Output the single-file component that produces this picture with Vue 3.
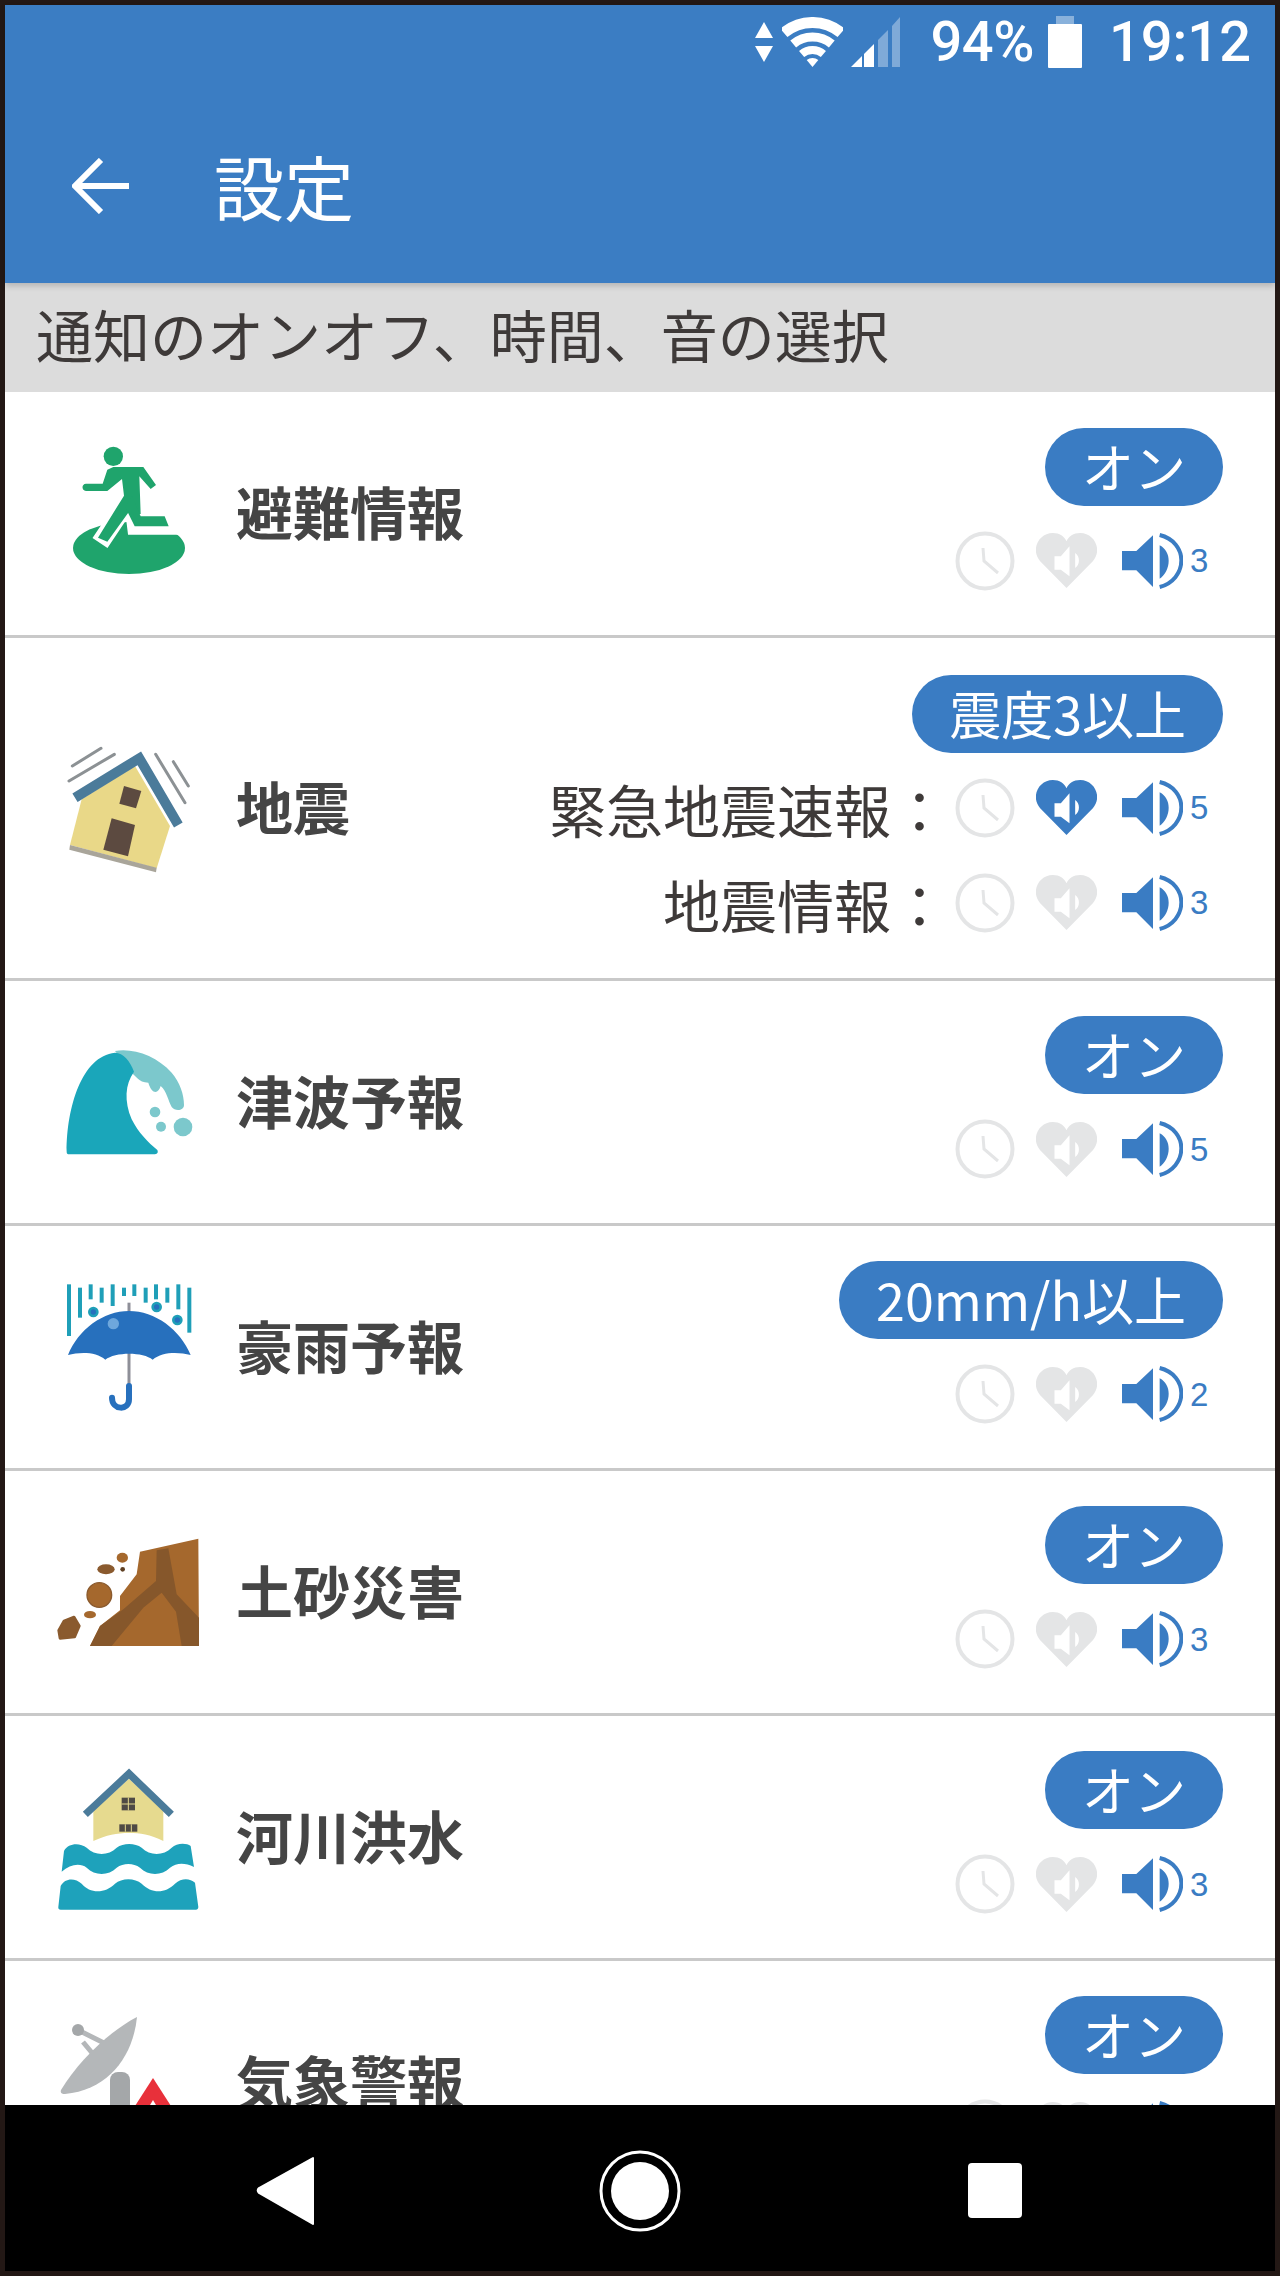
<script setup>
const rows = [
  { id: 'evac', name: '避難情報', pill: 'オン', lines: [{ label: '', heart: false, vol: 3 }] },
  {
    id: 'quake',
    name: '地震',
    pill: '震度3以上',
    lines: [
      { label: '緊急地震速報：', heart: true, vol: 5 },
      { label: '地震情報：', heart: false, vol: 3 }
    ]
  },
  { id: 'tsunami', name: '津波予報', pill: 'オン', lines: [{ label: '', heart: false, vol: 5 }] },
  { id: 'rain', name: '豪雨予報', pill: '20mm/h以上', lines: [{ label: '', heart: false, vol: 2 }] },
  { id: 'slide', name: '土砂災害', pill: 'オン', lines: [{ label: '', heart: false, vol: 3 }] },
  { id: 'flood', name: '河川洪水', pill: 'オン', lines: [{ label: '', heart: false, vol: 3 }] },
  { id: 'weather', name: '気象警報', pill: 'オン', lines: [{ label: '', heart: false, vol: 3 }] }
]

const rainBars = [
  [207, 850, 1005], [240, 860, 950], [272, 850, 895], [305, 860, 905],
  [338, 850, 915], [372, 860, 885], [403, 850, 885], [437, 860, 905],
  [468, 850, 895], [502, 860, 905], [535, 850, 925], [568, 860, 995]
]
</script>

<template>
  <div class="screen">
    <header class="appbar">
      <div class="status">
        <svg class="st-arrows" viewBox="0 0 18 40"><path d="M9 0 18 16H0Z M0 24H18L9 40Z" fill="#fff" /></svg>
        <svg class="st-wifi" viewBox="0 0 61 50">
          <g fill="none" stroke="#fff">
            <path d="M1.9 15.9A44.5 44.5 0 0 1 59.1 15.9" stroke-width="11" />
            <path d="M11.2 27A30 30 0 0 1 49.8 27" stroke-width="9" />
            <path d="M19.6 37A17 17 0 0 1 41.4 37" stroke-width="8" />
          </g>
          <path d="M30.5 50 24.7 43.1A9 9 0 0 1 36.3 43.1Z" fill="#fff" />
        </svg>
        <svg class="st-signal" viewBox="0 0 49 50">
          <path d="M0 50 11 39V50Z" fill="#fff" />
          <path d="M13 37 23 27V50H13Z" fill="#fff" />
          <path d="M27 23 37 13V50H27Z" fill="#fff" fill-opacity=".35" />
          <path d="M41 9 49 0V50H41Z" fill="#fff" fill-opacity=".35" />
        </svg>
        <span class="st-pct">94%</span>
        <svg class="st-batt" viewBox="0 0 34 52">
          <rect x="8" y="0" width="18" height="8" fill="#fff" fill-opacity=".4" />
          <rect x="0" y="8" width="34" height="44" rx="1" fill="#fff" />
        </svg>
        <span class="st-time">19:12</span>
      </div>
      <div class="toolbar">
        <svg class="back" viewBox="0 0 57 56">
          <path d="M57 28H5M29 2 3 28 29 54" fill="none" stroke="#fff" stroke-width="6" />
        </svg>
        <h1 class="title">設定</h1>
      </div>
    </header>

    <div class="band">通知のオンオフ、時間、音の選択</div>

    <ul class="list">
      <li v-for="row in rows" :key="row.id" class="row" :class="{ tall: row.lines.length > 1 }">
        <!-- 避難情報 -->
        <svg v-if="row.id === 'evac'" class="pic" viewBox="144 102 480 480">
          <ellipse cx="387" cy="447" rx="168" ry="78" fill="#1fa46c" />
          <path d="M395 290 300 432M398 300 408 380H540" fill="none" stroke="#fff" stroke-width="54" />
          <circle cx="340" cy="172" r="29" fill="#1fa46c" />
          <path d="M322 212 340 204H430L468 258 452 270 418 232 422 345 410 345 400 320 322 428 294 416 372 290 366 240 322 276H258C244 276 244 254 258 254H308Z" fill="#1fa46c" />
          <path d="M396 290 422 352H494L506 382H404L376 325Z" fill="#1fa46c" />
        </svg>
        <!-- 地震 -->
        <svg v-else-if="row.id === 'quake'" class="pic" viewBox="144 981 480 480">
          <g fill="none" stroke="#8c9194" stroke-width="9" stroke-linecap="round">
            <path d="M217 1095 303 1042M207 1140 343 1060M467 1060 555 1205M520 1082 565 1155" />
          </g>
          <path d="M245 1195 405 1095 510 1275 470 1402 210 1332Z" fill="#e9d888" />
          <path d="M210 1332 470 1400 468 1414 208 1346Z" fill="#a9a59a" />
          <path d="M225 1190 418 1072 535 1272" fill="none" stroke="#4b7b9a" stroke-width="30" />
          <path d="M372 1155 424 1170 408 1222 358 1208Z" fill="#5c4a40" />
          <path d="M335 1252 405 1272 384 1366 310 1346Z" fill="#5c4a40" />
        </svg>
        <!-- 津波 -->
        <svg v-else-if="row.id === 'tsunami'" class="pic" viewBox="144 63 480 480">
          <path d="M345 150C400 140 470 165 515 215 540 245 552 280 552 312 552 330 525 332 515 318 505 300 500 270 482 255 475 280 455 280 445 245 430 245 420 240 412 232L395 215Z" fill="#7cc8cc" />
          <path d="M200 452C200 320 245 165 345 155 370 155 390 180 402 212 375 250 372 300 395 355 415 395 445 425 472 447 476 456 470 460 462 460H208C202 460 200 458 200 452Z" fill="#1aa6ba" />
          <circle cx="465" cy="333" r="16" fill="#7cc8cc" />
          <circle cx="483" cy="377" r="15" fill="#7cc8cc" />
          <circle cx="549" cy="378" r="28" fill="#7cc8cc" />
        </svg>
        <!-- 豪雨 -->
        <svg v-else-if="row.id === 'rain'" class="pic" viewBox="144 798 480 480">
          <path
            v-for="b in rainBars"
            :key="b[0]"
            :d="`M${b[0]} ${b[1]}V${b[2]}`"
            fill="none"
            stroke="#1f9fb8"
            stroke-width="12"
          />
          <g fill="#2770bd" stroke="#1f9fb8" stroke-width="8">
            <circle cx="280" cy="933" r="12" />
            <circle cx="470" cy="918" r="12" />
            <circle cx="532" cy="957" r="12" />
          </g>
          <path d="M387 905V1160" stroke="#8e8f98" stroke-width="9" />
          <path d="M204 1062C235 985 310 930 387 930 465 930 540 985 572 1062 535 1052 485 1052 458 1076 430 1052 345 1052 316 1076 290 1052 240 1052 204 1062Z" fill="#2770bd" />
          <circle cx="340" cy="968" r="17" fill="#6ea7dc" />
          <path d="M387 1155V1195C387 1230 336 1228 336 1190" fill="none" stroke="#2770bd" stroke-width="18" stroke-linecap="round" />
        </svg>
        <!-- 土砂 -->
        <svg v-else-if="row.id === 'slide'" class="pic" viewBox="144 93 480 480">
          <path d="M270 495 300 435 360 388 360 345 410 280 420 212 595 173 597 495Z" fill="#a5682d" />
          <path d="M470 208 505 202 530 340 597 410V495H545L528 392 485 335 430 380 335 495H270L300 435 370 385 468 300Z" fill="#86572b" />
          <path d="M176 448 192 420 222 408 238 435 224 468 180 472Z" fill="#8a5a2e" stroke="#8a5a2e" stroke-width="8" stroke-linejoin="round" />
          <ellipse cx="298" cy="342" rx="37" ry="37" fill="#a5682d" stroke="#8a5a2e" stroke-width="4" />
          <ellipse cx="270" cy="401" rx="18" ry="11" fill="#a5682d" />
          <ellipse cx="318" cy="265" rx="26" ry="15" fill="#8a5a2e" />
          <ellipse cx="367" cy="230" rx="17" ry="15" fill="#a5682d" />
          <circle cx="368" cy="265" r="7" fill="#5f3f22" />
        </svg>
        <!-- 洪水 -->
        <svg v-else-if="row.id === 'flood'" class="pic" viewBox="144 828 480 480">
          <path d="M280 990 387 893 490 990V1080C450 1060 420 1056 387 1056 350 1056 320 1062 280 1080Z" fill="#e6da8f" />
          <path d="M256 1000 387 878 514 1000" fill="none" stroke="#4b7b9a" stroke-width="22" />
          <rect x="365" y="950" width="40" height="38" fill="#4f4a45" />
          <path d="M385 950V988M365 969H405" stroke="#e6da8f" stroke-width="3" />
          <rect x="358" y="1030" width="54" height="22" fill="#4f4a45" />
          <path d="M376 1030V1052M394 1030V1052" stroke="#e6da8f" stroke-width="3" />
          <path d="M192 1110C205 1085 240 1085 260 1100 285 1125 325 1125 350 1100 370 1085 405 1085 425 1100 450 1125 490 1125 515 1100 530 1085 560 1085 572 1095L582 1158C555 1145 530 1145 510 1160 485 1185 445 1185 420 1160 400 1145 370 1145 350 1160 325 1185 285 1185 260 1160 240 1145 210 1150 185 1172Z" fill="#1ea2bb" />
          <path d="M182 1215C195 1190 225 1190 245 1208 270 1238 315 1238 345 1208 365 1190 405 1190 425 1208 455 1238 495 1238 525 1208 545 1190 570 1192 585 1205L595 1278C595 1283 592 1286 588 1286H182C177 1286 174 1283 175 1278Z" fill="#1ea2bb" />
        </svg>
        <!-- 気象 -->
        <svg v-else class="pic pic-over" viewBox="0 0 160 160">
          <path d="M30 28 58 42M35 40 45 52" stroke="#b4b7b9" stroke-width="5" fill="none" />
          <circle cx="30" cy="28" r="6" fill="#a4a7a9" />
          <path d="M89 15C60 30 30 60 13 88 12 91 14 92 17 92 60 88 85 55 89 15Z" fill="#b4b7b9" />
          <rect x="62" y="70" width="20" height="90" rx="8" fill="#a4a7a9" />
          <path d="M105 76 60 146H150Z" fill="#e8303a" />
          <path d="M105 98 85 132H125Z" fill="#fff" />
        </svg>

        <span class="name">{{ row.name }}</span>

        <div class="right">
          <span class="pill">{{ row.pill }}</span>
          <div v-for="(line, i) in row.lines" :key="i" class="line">
            <span v-if="line.label" class="label">{{ line.label }}</span>
            <svg class="clock" viewBox="0 0 60 60">
              <circle cx="30" cy="30" r="27.5" fill="none" stroke="#e4e5e6" stroke-width="4" />
              <path d="M28 17 29 30 43 42" fill="none" stroke="#e4e5e6" stroke-width="3" />
            </svg>
            <svg class="heart" viewBox="0 0 182 165">
              <path
                d="M91 165 12 85C-18 50 8 0 50 0 70 0 85 10 91 25 97 10 112 0 132 0 174 0 200 50 170 85Z"
                :fill="line.heart ? '#3a7cc3' : '#e4e5e6'"
              />
              <path d="M55 70H74L100 40V130L74 110H55ZM117 60C132 70 132 95 117 105Z" fill="#fff" />
            </svg>
            <svg class="speaker" viewBox="0 0 183 168">
              <path d="M0 54H43L93 7V162L43 112H0ZM113 37C132 47 140 65 140 83 140 105 130 125 113 137Z" fill="#3a7cc3" />
              <path d="M113 6C155 16 178 48 178 82 178 120 152 152 113 162" fill="none" stroke="#3a7cc3" stroke-width="12" />
            </svg>
            <span class="vol">{{ line.vol }}</span>
          </div>
        </div>
      </li>
    </ul>

    <nav class="navbar">
      <svg class="nav-icon" viewBox="0 0 110 84">
        <path d="M83 9V75L29 44C27 42 27 41 29 39Z" fill="#fff" stroke="#fff" stroke-width="2" stroke-linejoin="round" />
      </svg>
      <svg class="nav-icon" viewBox="0 0 110 84">
        <circle cx="55" cy="42" r="39" fill="none" stroke="#fff" stroke-width="3" />
        <circle cx="55" cy="42" r="29" fill="#fff" />
      </svg>
      <svg class="nav-icon" viewBox="0 0 110 84">
        <rect x="28" y="14" width="54" height="55" rx="4" fill="#fff" />
      </svg>
    </nav>
  </div>
</template>

<style>
html, body {
  margin: 0;
  background: #231815;
}
</style>

<style scoped>
.screen {
  box-sizing: border-box;
  height: 2276px;
  padding: 5px;
  background: #231815;
  display: flex;
  flex-direction: column;
  font-family: "Noto Sans CJK JP", "Noto Sans", sans-serif;
  color: #3e3a39;
  overflow: hidden;
}

/* 上のバー */
.appbar {
  background: #3b7dc3;
  color: #fff;
  height: 278px;
  flex: none;
  position: relative;
  z-index: 1;
  box-shadow: 0 3px 6px rgba(0, 0, 0, 0.18);
}

.status {
  height: 74px;
  display: flex;
  justify-content: flex-end;
  align-items: center;
  padding-right: 24px;
  font-family: Roboto, sans-serif;
  font-size: 56px;
  font-weight: 500;
  line-height: 1;
}

.st-arrows { width: 18px; height: 40px; }
.st-wifi { width: 61px; height: 50px; margin-left: 9px; }
.st-signal { width: 49px; height: 50px; margin-left: 8px; }
.st-pct { margin-left: 31px; letter-spacing: -0.5px; }
.st-batt { width: 34px; height: 52px; margin-left: 14px; }
.st-time { margin-left: 27px; }

.toolbar {
  height: 194px;
  padding: 10px 0 0 67px;
  display: flex;
  align-items: center;
  gap: 85px;
}

.back { width: 57px; height: 56px; }

.title {
  margin: 0;
  font-size: 70px;
  font-weight: 400;
  line-height: 1;
}

.band {
  flex: none;
  height: 109px;
  box-sizing: border-box;
  background: #dcdcdc;
  padding-left: 31px;
  font-size: 57px;
  line-height: 100px;
  white-space: nowrap;
}

/* 一覧 */
.list {
  flex: 1;
  min-height: 0;
  margin: 0;
  padding: 0;
  list-style: none;
  background: #fff;
  overflow: hidden;
}

.row {
  box-sizing: border-box;
  height: 245px;
  flex: none;
  padding: 0 52px 0 43px;
  display: flex;
  align-items: center;
  border-bottom: 3px solid #c9c9c9;
}

.row:first-child { height: 245.5px; }
.row.tall { height: 343px; }

.pic {
  width: 160px;
  height: 160px;
  flex: none;
}

.name {
  margin-left: 28px;
  padding-bottom: 5px;
  font-size: 57px;
  font-weight: 700;
  line-height: 1;
  white-space: nowrap;
  color: #454545;
}

.right {
  margin-left: auto;
  display: flex;
  flex-direction: column;
  align-items: flex-end;
  margin-top: -8px;
}

.pill {
  height: 78px;
  padding: 0 37px;
  border-radius: 39px;
  background: #3a7cc3;
  color: #fff;
  font-size: 52px;
  line-height: 76px;
  white-space: nowrap;
}

.line {
  height: 60px;
  margin-top: 25px;
  padding-right: 15px;
  display: flex;
  align-items: center;
}

.line + .line { margin-top: 35px; }

.label {
  margin-right: 7px;
  font-size: 57px;
  line-height: 60px;
  white-space: nowrap;
}

.clock { width: 60px; height: 60px; }
.heart { width: 61px; height: 55px; margin-left: 21px; }
.speaker { width: 61px; height: 56px; margin-left: 25px; }

.vol {
  width: 18px;
  margin-left: 7px;
  font-family: "Liberation Sans", sans-serif;
  font-size: 33px;
  line-height: 1;
  color: #3a7cc3;
}

/* 下のナビ */
.navbar {
  flex: none;
  height: 166px;
  box-sizing: border-box;
  padding-top: 6px;
  background: #000;
  display: flex;
  justify-content: center;
  align-items: center;
  gap: 245px;
}

.nav-icon { width: 110px; height: 84px; }
</style>
